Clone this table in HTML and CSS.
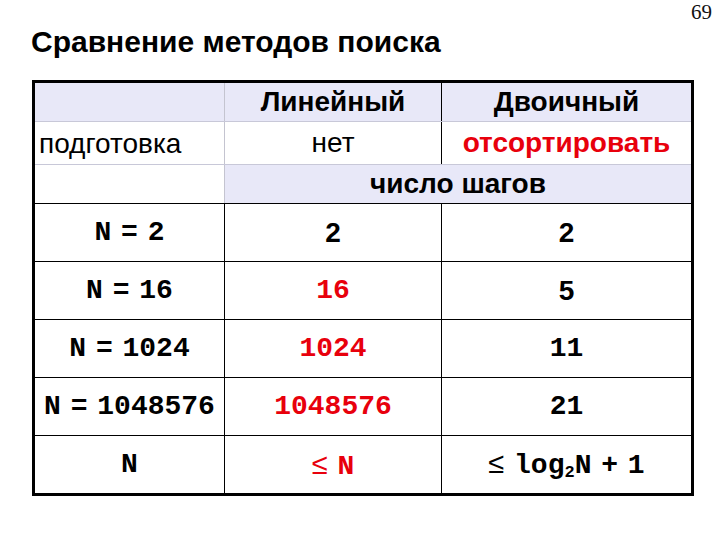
FILE: index.html
```html
<!DOCTYPE html>
<html lang="ru">
<head>
<meta charset="utf-8">
<title>Сравнение методов поиска</title>
<link rel="stylesheet" href="styles.css">
</head>
<body>
<div class="slide">
  <div class="page-num">69</div>
  <h1 class="title">Сравнение методов поиска</h1>
  <table class="cmp">
    <colgroup>
      <col class="c1"><col class="c2"><col class="c3">
    </colgroup>
    <tr class="r-head">
      <td class="lav g-right"></td>
      <td class="lav hd">Линейный</td>
      <td class="lav hd">Двоичный</td>
    </tr>
    <tr class="r-prep">
      <td class="prep g-right">подготовка</td>
      <td class="txt">нет</td>
      <td class="txt red bold">отсортировать</td>
    </tr>
    <tr class="r-steps">
      <td class="g-right"></td>
      <td class="lav hd steps" colspan="2">число шагов</td>
    </tr>
    <tr class="r-data">
      <td class="mono">N = 2</td>
      <td class="sans">2</td>
      <td class="sans">2</td>
    </tr>
    <tr class="r-data">
      <td class="mono">N = 16</td>
      <td class="mono red">16</td>
      <td class="sans">5</td>
    </tr>
    <tr class="r-data">
      <td class="mono">N = 1024</td>
      <td class="mono red">1024</td>
      <td class="mono">11</td>
    </tr>
    <tr class="r-data">
      <td class="mono">N = 1048576</td>
      <td class="mono red">1048576</td>
      <td class="mono">21</td>
    </tr>
    <tr class="r-data r-last">
      <td class="mono">N</td>
      <td class="mono red"><span class="le">≤</span> N</td>
      <td class="mono"><span class="le">≤</span> log<sub class="sub">2</sub>N + 1</td>
    </tr>
  </table>
</div>
</body>
</html>
```

FILE: styles.css
```css
html, body {
  margin: 0;
  padding: 0;
  background: #ffffff;
}

.slide {
  position: relative;
  width: 720px;
  height: 540px;
  overflow: hidden;
  font-family: "Liberation Sans", Arial, sans-serif;
  color: #000;
}

.page-num {
  position: absolute;
  top: 0;
  right: 8px;
  font-family: "Liberation Serif", "Times New Roman", serif;
  font-size: 21px;
  color: #111;
}

.title {
  margin: 0;
  padding: 25px 0 0 31px;
  height: 80px;
  box-sizing: border-box;
  font-size: 30px;
  font-weight: bold;
  line-height: 34px;
}

.cmp {
  margin-left: 32px;
  width: 659px;
  table-layout: fixed;
  border-collapse: collapse;
  border: 3px solid #000;
}

.c1 { width: 191px; }
.c2 { width: 217px; }
.c3 { width: 251px; }

.cmp td {
  padding: 0;
  text-align: center;
  vertical-align: middle;
  border: 1px solid #000;
}

.cmp td.g-right {
  border-right-color: #c4c4d0;
}

.lav { background: #e8e8f8; }

.r-head td {
  height: 38px;
  border-bottom: 1px solid #c8c8d8;
}

.r-prep td {
  height: 40px;
  border-bottom: 1px solid #c8c8d8;
}

.r-steps td {
  height: 38px;
}

.r-data td {
  height: 57px;
}

.hd {
  font-size: 28px;
  font-weight: bold;
}

.steps {
  padding-top: 4px;
  padding-left: 2px;
}

.txt {
  font-size: 28px;
  padding-top: 2px;
}

.cmp td.prep {
  text-align: left;
  padding-left: 4px;
  font-size: 28px;
  padding-top: 2px;
}

.bold { font-weight: bold; }

.red { color: #e8000c; }

.mono {
  font-family: "Liberation Mono", "Courier New", monospace;
  font-weight: bold;
  font-size: 28px;
  word-spacing: -7px;
}

.sans {
  font-size: 28px;
  font-weight: bold;
}

.le {
  font-family: "Liberation Sans", Arial, sans-serif;
  font-weight: normal;
  font-size: 29px;
}

.sub {
  font-size: 17px;
  vertical-align: -4px;
}
```
